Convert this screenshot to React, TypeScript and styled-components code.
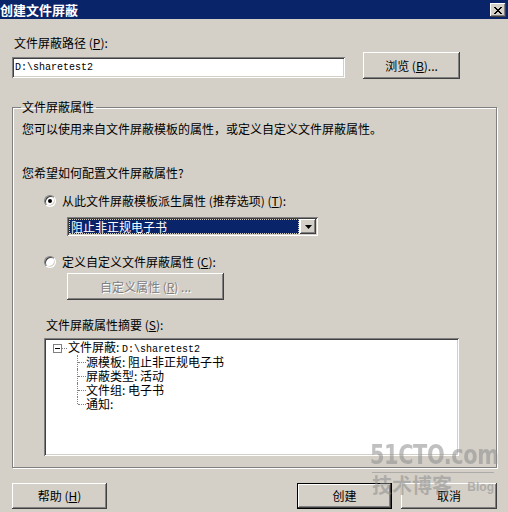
import React from "react";
import styled, { createGlobalStyle } from "styled-components";

const GlobalStyle = createGlobalStyle`
  html, body {
    margin: 0;
    padding: 0;
    background: #d4d0c8;
  }
  body {
    font-family: "Noto Sans CJK SC", "Liberation Sans", sans-serif;
    font-size: 12px;
  }
`;

const raised = `
  box-shadow: inset -1px -1px #404040, inset 1px 1px #ffffff,
    inset -2px -2px #808080, inset 2px 2px #d4d0c8;
`;

const sunken = `
  box-shadow: inset 1px 1px #808080, inset -1px -1px #ffffff,
    inset 2px 2px #404040, inset -2px -2px #d4d0c8;
`;

const Window = styled.div`
  position: relative;
  width: 508px;
  height: 512px;
  background: #d4d0c8;
  color: #000;
  overflow: hidden;
  line-height: 14px;
`;

const TitleBar = styled.div`
  display: flex;
  align-items: center;
  justify-content: space-between;
  height: 19px;
  background: #0a246a;
  color: #fff;
  font-weight: bold;
  font-size: 13px;
  padding-right: 2px;
`;

const CloseButton = styled.div`
  display: flex;
  align-items: center;
  justify-content: center;
  width: 16px;
  height: 14px;
  margin-top: 1px;
  background: #d4d0c8;
  ${raised}
`;

const Body = styled.div`
  padding: 0 11px 0 12px;
`;

const Label = styled.div<{ $indent?: number; $top?: number }>`
  margin-left: ${(p) => p.$indent ?? 0}px;
  margin-top: ${(p) => p.$top ?? 0}px;
  height: 14px;
  white-space: nowrap;
`;

const PathRow = styled.div`
  display: flex;
  align-items: flex-start;
  margin-top: 2px;
`;

const TextField = styled.div`
  width: 333px;
  height: 21px;
  margin-top: 5px;
  background: #fff;
  ${sunken}
  display: flex;
  align-items: center;
  padding-left: 3px;
  box-sizing: border-box;
`;

const Mono = styled.span`
  font-family: "Liberation Mono", "DejaVu Sans Mono", monospace;
  font-size: 10px;
`;

const Button = styled.div<{ $width: number; $default?: boolean; $disabled?: boolean }>`
  display: flex;
  align-items: center;
  justify-content: center;
  width: ${(p) => p.$width}px;
  height: 26px;
  box-sizing: border-box;
  background: #d4d0c8;
  color: ${(p) => (p.$disabled ? "#808080" : "#000")};
  text-shadow: ${(p) => (p.$disabled ? "1px 1px 0 #ffffff" : "none")};
  ${(p) =>
    p.$default
      ? `box-shadow: inset 0 0 0 1px #000, inset -2px -2px #404040, inset 2px 2px #ffffff,
    inset -3px -3px #808080;`
      : raised}
  white-space: nowrap;
`;

const BrowseButton = styled(Button)`
  margin-left: 18px;
  height: 27px;
`;

const Group = styled.fieldset`
  margin: 21px 0 0 0;
  padding: 8px 9px 10px 9px;
  border: 1px solid #808080;
  box-shadow: 1px 1px 0 #ffffff, inset 1px 1px 0 #ffffff;
  min-width: 0;
  height: 368px;
  box-sizing: border-box;
`;

const Legend = styled.legend`
  padding: 0 2px 0 1px;
  margin-left: -1px;
  line-height: 14px;
`;

const RadioRow = styled.div<{ $top: number }>`
  display: flex;
  align-items: center;
  gap: 6px;
  margin: ${(p) => p.$top}px 0 0 22px;
  height: 14px;
`;

const Radio = styled.span<{ $checked?: boolean }>`
  position: relative;
  width: 12px;
  height: 12px;
  border-radius: 50%;
  box-sizing: border-box;
  background: #fff;
  border: 1px solid;
  border-color: #808080 #ffffff #ffffff #808080;
  box-shadow: inset 1px 1px 0 #404040, inset -1px -1px 0 #d4d0c8;
  display: flex;
  align-items: center;
  justify-content: center;
  &::after {
    content: "";
    display: ${(p) => (p.$checked ? "block" : "none")};
    width: 4px;
    height: 4px;
    border-radius: 50%;
    background: #000;
  }
`;

const Combo = styled.div`
  display: flex;
  align-items: stretch;
  width: 251px;
  height: 19px;
  margin: 9px 0 0 45px;
  padding: 2px;
  box-sizing: border-box;
  background: #fff;
  ${sunken}
`;

const ComboValue = styled.div`
  flex: 1;
  display: flex;
  align-items: center;
  background: #0a246a;
  color: #fff;
  padding-left: 2px;
  margin-right: 1px;
  outline: 1px dotted #d4d0c8;
  outline-offset: -1px;
  font-size: 12px;
`;

const ComboArrow = styled.div`
  width: 16px;
  display: flex;
  align-items: center;
  justify-content: center;
  background: #d4d0c8;
  ${raised}
`;

const IndentBlock = styled.div<{ $indent: number; $top: number }>`
  margin: ${(p) => p.$top}px 0 0 ${(p) => p.$indent}px;
`;

const TreeBox = styled.div`
  width: 415px;
  height: 118px;
  margin: 6px 0 0 22px;
  box-sizing: border-box;
  background: #fff;
  ${sunken}
  padding: 3px 0 0 9px;
`;

const TreeRow = styled.div`
  display: flex;
  align-items: center;
  height: 14px;
  white-space: nowrap;
`;

const Expander = styled.span`
  display: flex;
  align-items: center;
  justify-content: center;
  width: 9px;
  height: 9px;
  box-sizing: border-box;
  border: 1px solid #808080;
  background: #fff;
  &::after {
    content: "";
    width: 5px;
    height: 1px;
    background: #000;
  }
`;

const Stub = styled.span<{ $width: number }>`
  width: ${(p) => p.$width}px;
  border-top: 1px dotted #808080;
  margin-right: 1px;
`;

const Children = styled.div`
  margin-left: 24px;
`;

const Connector = styled.span<{ $last?: boolean }>`
  position: relative;
  width: 9px;
  height: 14px;
  margin-right: 0;
  &::before {
    content: "";
    position: absolute;
    left: 0;
    top: 0;
    height: ${(p) => (p.$last ? "7px" : "14px")};
    border-left: 1px dotted #808080;
  }
  &::after {
    content: "";
    position: absolute;
    left: 1px;
    top: 7px;
    width: 8px;
    border-top: 1px dotted #808080;
  }
`;

const Footer = styled.div`
  display: flex;
  align-items: center;
  margin-top: 15px;
`;

const Spacer = styled.div`
  flex: 1;
`;

const Watermark = styled.div`
  position: absolute;
  left: 370px;
  top: 440px;
  width: 126px;
  color: rgba(140, 140, 140, 0.55);
  pointer-events: none;
`;

const WatermarkBrand = styled.div`
  font-family: "DejaVu Sans Condensed", "DejaVu Sans", sans-serif;
  font-weight: bold;
  font-size: 27px;
  line-height: 30px;
  letter-spacing: -0.5px;
  transform: scaleX(0.86);
  transform-origin: left center;
  white-space: nowrap;
`;

const WatermarkRule = styled.div`
  height: 1px;
  margin: 2px 2px 0 2px;
  background: rgba(140, 140, 140, 0.55);
`;

const WatermarkLine = styled.div`
  display: flex;
  align-items: flex-end;
  justify-content: space-between;
  padding: 0 2px;
`;

const WatermarkCn = styled.span`
  font-size: 20px;
  line-height: 24px;
  font-weight: bold;
`;

const WatermarkBlog = styled.span`
  font-family: "Liberation Sans", sans-serif;
  font-weight: bold;
  font-size: 12px;
  line-height: 20px;
`;

const Key = ({ k }: { k: string }) => (
  <>
    (<u>{k}</u>)
  </>
);

const summaryItems = [
  { label: "源模板:", value: "阻止非正规电子书" },
  { label: "屏蔽类型:", value: "活动" },
  { label: "文件组:", value: "电子书" },
  { label: "通知:", value: "" },
];

export default function App() {
  return (
    <>
      <GlobalStyle />
      <Window>
        <TitleBar>
          <span>创建文件屏蔽</span>
          <CloseButton>
            <svg width="8" height="7" viewBox="0 0 8 7">
              <path d="M0 0 L7 7 M1 0 L8 7 M7 0 L0 7 M8 0 L1 7" stroke="#000" strokeWidth="1" />
            </svg>
          </CloseButton>
        </TitleBar>
        <Body>
          <Label $indent={2} $top={17}>
            文件屏蔽路径 <Key k="P" />:
          </Label>
          <PathRow>
            <TextField>
              <Mono>D:\sharetest2</Mono>
            </TextField>
            <BrowseButton $width={97}>
              浏览 <Key k="B" />...
            </BrowseButton>
          </PathRow>

          <Group>
            <Legend>文件屏蔽属性</Legend>
            <Label>您可以使用来自文件屏蔽模板的属性，或定义自定义文件屏蔽属性。</Label>
            <Label $top={30}>您希望如何配置文件屏蔽属性?</Label>

            <RadioRow $top={14}>
              <Radio $checked />
              <span>
                从此文件屏蔽模板派生属性 (推荐选项) <Key k="T" />:
              </span>
            </RadioRow>
            <Combo>
              <ComboValue>阻止非正规电子书</ComboValue>
              <ComboArrow>
                <svg width="7" height="4" viewBox="0 0 7 4">
                  <path d="M0 0 H7 L3.5 4 Z" fill="#000" />
                </svg>
              </ComboArrow>
            </Combo>

            <RadioRow $top={19}>
              <Radio />
              <span>
                定义自定义文件屏蔽属性 <Key k="C" />:
              </span>
            </RadioRow>
            <IndentBlock $indent={45} $top={4}>
              <Button $width={157} $disabled style={{ height: 27 }}>
                自定义属性 <Key k="R" /> ...
              </Button>
            </IndentBlock>

            <Label $indent={24} $top={18}>
              文件屏蔽属性摘要 <Key k="S" />:
            </Label>
            <TreeBox>
              <TreeRow>
                <Expander />
                <Stub $width={5} />
                <span>
                  文件屏蔽: <Mono>D:\sharetest2</Mono>
                </span>
              </TreeRow>
              <Children>
                {summaryItems.map((item, i) => (
                  <TreeRow key={item.label}>
                    <Connector $last={i === summaryItems.length - 1} />
                    <span>
                      {item.label} {item.value}
                    </span>
                  </TreeRow>
                ))}
              </Children>
            </TreeBox>
          </Group>

          <Footer>
            <Button $width={95}>
              帮助 <Key k="H" />
            </Button>
            <Spacer />
            <Button $width={95} $default>
              创建
            </Button>
            <Button $width={96} style={{ marginLeft: 9 }}>
              取消
            </Button>
          </Footer>
        </Body>
        <Watermark>
          <WatermarkBrand>51CTO.com</WatermarkBrand>
          <WatermarkRule />
          <WatermarkLine>
            <WatermarkCn>技术博客</WatermarkCn>
            <WatermarkBlog>Blog</WatermarkBlog>
          </WatermarkLine>
        </Watermark>
      </Window>
    </>
  );
}
